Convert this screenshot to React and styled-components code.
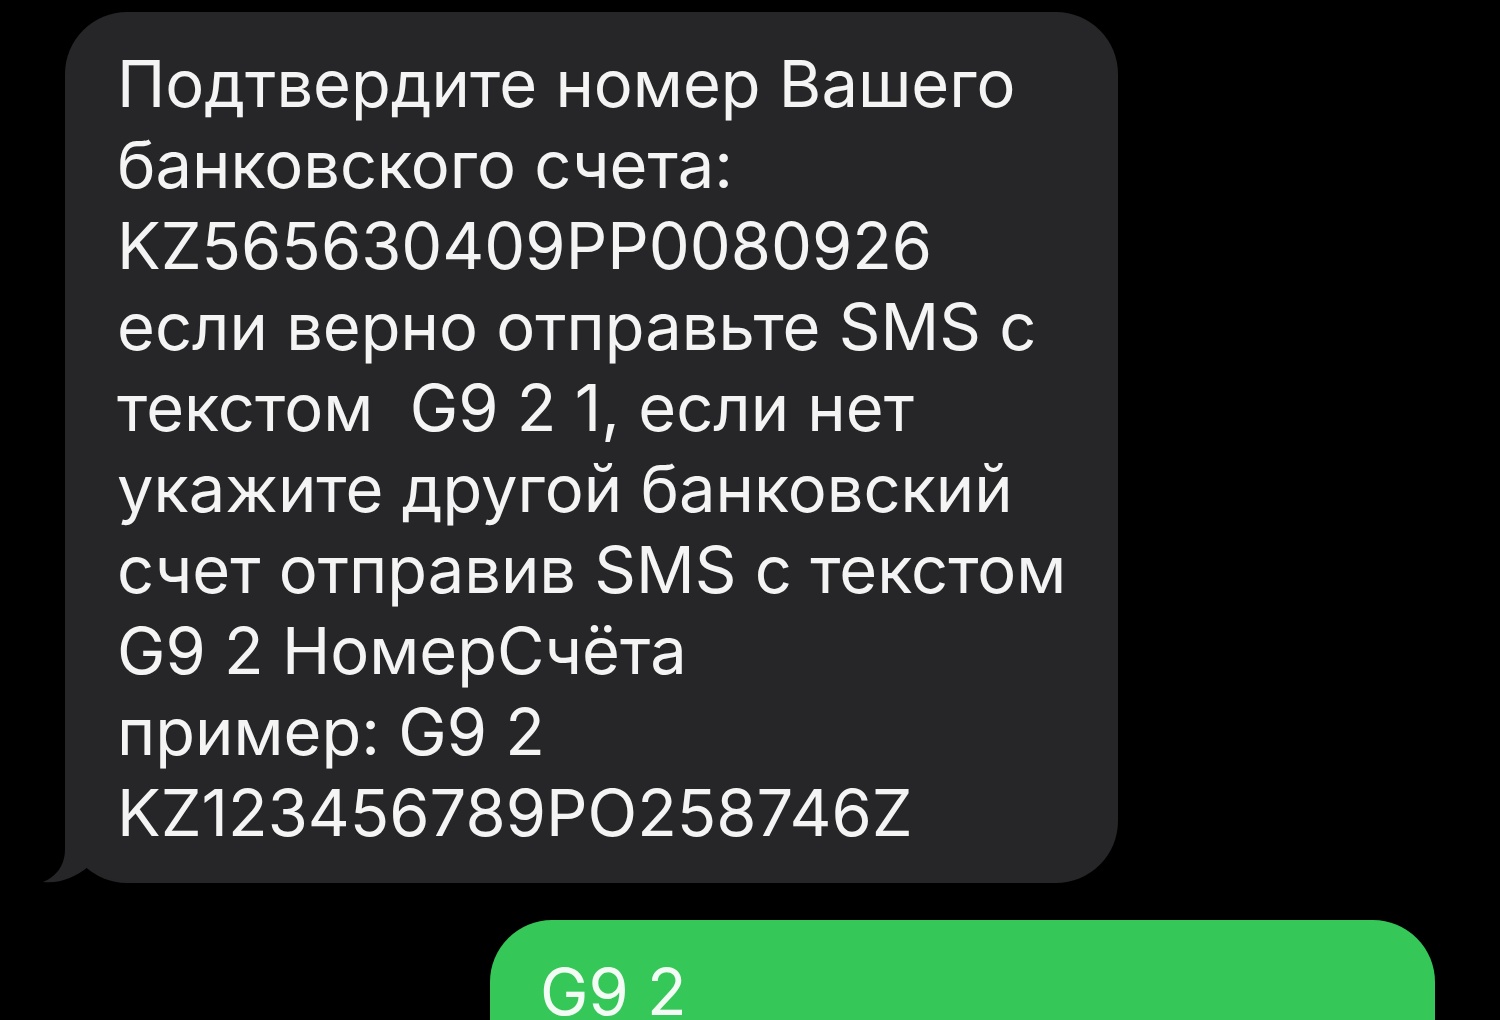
import { createGlobalStyle, styled } from "styled-components";

const GlobalStyle = createGlobalStyle`
  html, body {
    margin: 0;
    padding: 0;
    background: #000;
    overflow: hidden;
  }
  body {
    font-family: Inter, "Noto Sans", "Liberation Sans", sans-serif;
  }
`;

const incoming = `Подтвердите номер Вашего
банковского счета:
KZ565630409PP0080926
если верно отправьте SMS с
текстом  G9 2 1, если нет
укажите другой банковский
счет отправив SMS с текстом
G9 2 НомерСчёта
пример: G9 2
KZ123456789PO258746Z`;

const App = () => {
  return (
    <>
      <GlobalStyle />
      <Thread>
        <Bubble $from="them">
          <Tail viewBox="0 0 100 84" aria-hidden="true">
            <path d="M25 0 L25 50 C25 68 15 78 3 83 C20 85 35 78 48 68 C60 78 75 83 100 83 L100 0 Z" />
          </Tail>
          <MessageText>{incoming}</MessageText>
        </Bubble>
        <Bubble $from="me">
          <MessageText>G9 2</MessageText>
        </Bubble>
      </Thread>
    </>
  );
};

export default App;

const Thread = styled.div`
  height: 1020px;
  display: flex;
  flex-direction: column;
  gap: 37px;
  padding-top: 12px;
  box-sizing: border-box;
`;

const Bubble = styled.div`
  position: relative;
  box-sizing: border-box;
  border-radius: 62px;
  padding: 31px 40px 30px 52px;
  color: #f4f4f4;
  ${(p) =>
    p.$from === "them"
      ? `
    margin-left: 65px;
    width: 1053px;
    background: #262628;
  `
      : `
    margin-left: 490px;
    width: 945px;
    min-height: 200px;
    flex-shrink: 0;
    background: #36c759;
    padding-left: 50px;
    color: #f2fbf4;
  `}
`;

const MessageText = styled.div`
  position: relative;
  font-size: 65px;
  line-height: 81px;
  letter-spacing: 0;
  white-space: pre;
`;

const Tail = styled.svg`
  position: absolute;
  left: -25px;
  bottom: 0;
  width: 100px;
  height: 84px;
  fill: #262628;
`;
